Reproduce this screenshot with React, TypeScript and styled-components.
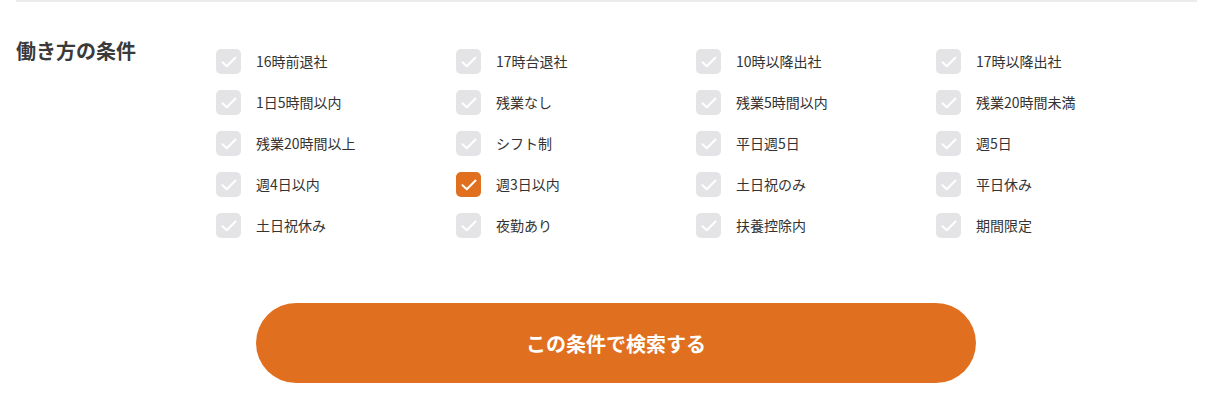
import styled, { createGlobalStyle } from 'styled-components';

const GlobalStyle = createGlobalStyle`
  body {
    margin: 0;
    background: #ffffff;
    font-family: "Noto Sans CJK JP", "Noto Sans", sans-serif;
    color: #333333;
  }
`;

const Page = styled.div`
  padding: 0 16px;
`;

const Section = styled.section`
  display: flex;
  border-top: 2px solid #ececec;
  padding-top: 35px;
`;

const Title = styled.h2`
  width: 200px;
  flex-shrink: 0;
  margin: 0;
  font-size: 20px;
  line-height: 28px;
  font-weight: 700;
  color: #3a3a3a;
`;

const Grid = styled.div`
  display: grid;
  grid-template-columns: repeat(4, 240px);
  grid-auto-rows: 41px;
  padding-top: 12px;
`;

const Option = styled.label`
  display: flex;
  align-items: flex-start;
  gap: 15px;
  font-size: 14px;
  line-height: 25px;
  color: #333333;
  cursor: pointer;
`;

const Box = styled.span<{ $checked?: boolean }>`
  width: 25px;
  height: 25px;
  border-radius: 5px;
  background: ${(p) => (p.$checked ? '#e07020' : '#e4e4e6')};
  display: flex;
  align-items: center;
  justify-content: center;
  flex-shrink: 0;
`;

const Footer = styled.div`
  display: flex;
  justify-content: center;
  padding: 49px 0 0;
`;

const SearchButton = styled.button`
  width: 720px;
  height: 80px;
  margin-left: 19px;
  border: none;
  border-radius: 40px;
  background: #e07020;
  color: #ffffff;
  font-family: inherit;
  font-size: 20px;
  font-weight: 700;
  cursor: pointer;
`;

const Check = () => (
  <svg width="16" height="12" viewBox="0 0 16 12" fill="none">
    <path d="M1.5 6.2 L5.8 10.2 L14.5 1.5" stroke="#ffffff" strokeWidth="2" strokeLinecap="round" strokeLinejoin="round" />
  </svg>
);

const options = [
  '16時前退社', '17時台退社', '10時以降出社', '17時以降出社',
  '1日5時間以内', '残業なし', '残業5時間以内', '残業20時間未満',
  '残業20時間以上', 'シフト制', '平日週5日', '週5日',
  '週4日以内', '週3日以内', '土日祝のみ', '平日休み',
  '土日祝休み', '夜勤あり', '扶養控除内', '期間限定',
];

const checked = new Set(['週3日以内']);

export default function App() {
  return (
    <Page>
      <GlobalStyle />
      <Section>
        <Title>働き方の条件</Title>
        <Grid>
          {options.map((o) => (
            <Option key={o}>
              <Box $checked={checked.has(o)}>
                <Check />
              </Box>
              {o}
            </Option>
          ))}
        </Grid>
      </Section>
      <Footer>
        <SearchButton>この条件で検索する</SearchButton>
      </Footer>
    </Page>
  );
}
